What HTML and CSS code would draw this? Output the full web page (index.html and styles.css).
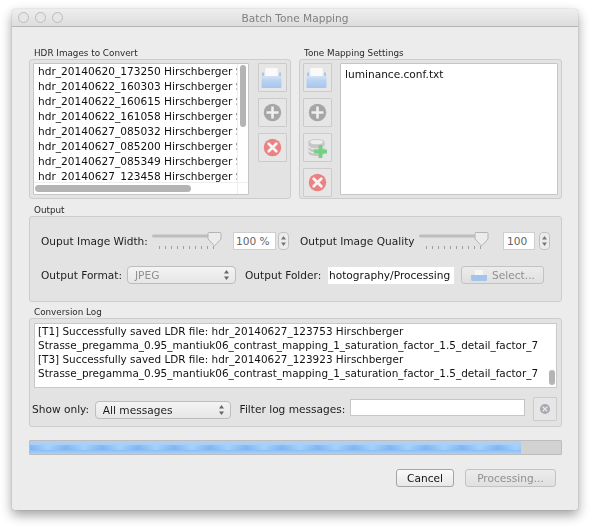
FILE: index.html
```html
<!DOCTYPE html>
<html lang="en">
<head>
<meta charset="utf-8">
<title>Batch Tone Mapping</title>
<link rel="stylesheet" href="styles.css">
</head>
<body>
<svg class="defs" width="0" height="0" aria-hidden="true">
  <defs>
    <linearGradient id="tray" x1="0" y1="0" x2="0" y2="1"><stop offset="0" stop-color="#d3e2f6"/><stop offset=".35" stop-color="#bcd3f2"/><stop offset="1" stop-color="#a5c5ee"/></linearGradient>
    <symbol id="i-open" viewBox="0 0 27 27">
      <path d="M3 8.500h2V12H3z" fill="#a9c6ec"/>
      <path d="M20 8.500h2V12h-2z" fill="#a9c6ec"/>
      <path d="M6 3.500h13v9H6z" fill="#fafafa" stroke="#dedede" stroke-width=".5"/>
      <path d="M2.500 12h20v10.500c0 1-.8 1.500-1.500 1.500H4c-.8 0-1.500-.5-1.500-1.500z" fill="url(#tray)"/>
    </symbol>
    <symbol id="i-add" viewBox="0 0 27 27">
      <circle cx="13.500" cy="13.500" r="8.700" fill="#a6a6a6"/>
      <path d="M13.500 7.500v12M7.500 13.500h12" stroke="#efefef" stroke-width="2.600"/>
    </symbol>
    <symbol id="i-del" viewBox="0 0 27 27">
      <circle cx="13.500" cy="13.500" r="8.700" fill="#e98383"/>
      <path d="M9.700 9.700l7.600 7.600M17.300 9.700l-7.600 7.600" stroke="#f8f0f0" stroke-width="2.800" stroke-linecap="round"/>
    </symbol>
    <symbol id="i-db" viewBox="0 0 27 27">
      <path d="M4.500 8c0-2 3.500-3 8-3s8 1 8 3v11c0 2-3.500 3-8 3s-8-1-8-3z" fill="#c6c6c6"/>
      <ellipse cx="12.500" cy="8" rx="6.500" ry="2.300" fill="#ececec"/>
      <path d="M4.500 12c1 2 4 3 8 3s7-1 8-3M4.500 16c1 2 4 3 8 3s7-1 8-3" fill="none" stroke="#ebebeb" stroke-width="1.100"/>
      <path d="M16.500 11v13M10 17.500h13" stroke="#74d084" stroke-width="3.800"/>
    </symbol>
    <symbol id="i-clear" viewBox="0 0 24 24">
      <circle cx="12" cy="12" r="5.500" fill="#a9a9b2"/>
      <path d="M9.500 9.500l5 5M14.500 9.500l-5 5" stroke="#e6e6e6" stroke-width="1.500"/>
    </symbol>
    <symbol id="i-mini" viewBox="0 0 18 14">
      <path d="M5 2h8v5H5z" fill="#f4f5f7"/>
      <path d="M1 7h16v4.500c0 .8-.6 1.500-1.400 1.500H2.400C1.600 13 1 12.300 1 11.500z" fill="#a6c4ea"/>
    </symbol>
    <symbol id="i-updn" viewBox="0 0 7 12">
      <path d="M3.500 1L6 4.500H1zM3.500 11L1 7.500h5z"/>
    </symbol>
    <symbol id="i-slider" viewBox="0 0 74 22" preserveAspectRatio="xMinYMin">
      <rect x="0" y="2.500" width="66" height="3" rx="1.500" fill="#bdbdbd"/>
      <g fill="#9e9e9e"><rect x="7" y="14" width="1" height="3"/><rect x="13" y="14" width="1" height="3"/><rect x="19" y="14" width="1" height="3"/><rect x="25" y="14" width="1" height="3"/><rect x="31" y="14" width="1" height="3"/><rect x="37" y="14" width="1" height="3"/><rect x="43" y="14" width="1" height="3"/><rect x="49" y="14" width="1" height="3"/><rect x="55" y="14" width="1" height="3"/><rect x="61" y="14" width="1" height="3"/></g>
      <path d="M56 1.500c0-.6.400-1 1-1h11c.6 0 1 .4 1 1v5.500L62.500 14 56 7z" fill="#ececec" stroke="#b4b4b4"/>
    </symbol>
  </defs>
</svg>

<main class="window">
  <header class="titlebar">
    <div class="lights"><i class="light"></i><i class="light"></i><i class="light"></i></div>
    <h1 class="title">Batch Tone Mapping</h1>
  </header>

  <div class="content">
    <div class="top">
      <section class="sec sec-hdr">
        <h2 class="cap">HDR Images to Convert</h2>
        <div class="group group-row group-hdr">
          <div class="list list-hdr">
            <ul class="rows">
              <li>hdr_20140620_173250 Hirschberger Strasse</li>
              <li>hdr_20140622_160303 Hirschberger Strasse</li>
              <li>hdr_20140622_160615 Hirschberger Strasse</li>
              <li>hdr_20140622_161058 Hirschberger Strasse</li>
              <li>hdr_20140627_085032 Hirschberger Strasse</li>
              <li>hdr_20140627_085200 Hirschberger Strasse</li>
              <li>hdr_20140627_085349 Hirschberger Strasse</li>
              <li>hdr_20140627_123458 Hirschberger Strasse</li>
            </ul>
            <div class="vtrack"><span class="vthumb"></span></div>
            <div class="htrack"><span class="hthumb"></span></div>
            <div class="corner"></div>
          </div>
          <div class="tools">
            <button class="tool" type="button"><svg><use href="#i-open"/></svg></button>
            <button class="tool" type="button"><svg><use href="#i-add"/></svg></button>
            <button class="tool" type="button"><svg><use href="#i-del"/></svg></button>
          </div>
        </div>
      </section>

      <section class="sec sec-tone">
        <h2 class="cap">Tone Mapping Settings</h2>
        <div class="group group-row group-tone">
          <div class="tools">
            <button class="tool" type="button"><svg><use href="#i-open"/></svg></button>
            <button class="tool" type="button"><svg><use href="#i-add"/></svg></button>
            <button class="tool" type="button"><svg><use href="#i-db"/></svg></button>
            <button class="tool" type="button"><svg><use href="#i-del"/></svg></button>
          </div>
          <div class="list list-tone">luminance.conf.txt</div>
        </div>
      </section>
    </div>

    <section class="sec">
      <h2 class="cap cap-out">Output</h2>
      <div class="group group-out">
        <div class="out-row out-row-1">
          <span class="lab lab-w">Ouput Image Width:</span>
          <svg class="slider"><use href="#i-slider"/></svg>
          <span class="field field-w">100 %</span>
          <span class="stepper"><svg><use href="#i-updn"/></svg></span>
          <span class="lab lab-q">Output Image Quality</span>
          <svg class="slider slider-q"><use href="#i-slider"/></svg>
          <span class="field field-q">100</span>
          <span class="stepper stepper-q"><svg><use href="#i-updn"/></svg></span>
        </div>
        <div class="out-row out-row-2">
          <span class="lab lab-f">Output Format:</span>
          <span class="select select-f">JPEG<svg><use href="#i-updn"/></svg></span>
          <span class="lab lab-d">Output Folder:</span>
          <span class="path">hotography/Processing</span>
          <span class="btn btn-sel"><svg><use href="#i-mini"/></svg>Select...</span>
        </div>
      </div>
    </section>

    <section class="sec">
      <h2 class="cap cap-log">Conversion Log</h2>
      <div class="group group-log">
        <div class="log">
          <div class="log-text">
            <p>[T1] Successfully saved LDR file: hdr_20140627_123753 Hirschberger Strasse_pregamma_0.95_mantiuk06_contrast_mapping_1_saturation_factor_1.5_detail_factor_7</p>
            <p>[T3] Successfully saved LDR file: hdr_20140627_123923 Hirschberger Strasse_pregamma_0.95_mantiuk06_contrast_mapping_1_saturation_factor_1.5_detail_factor_7</p>
          </div>
          <div class="log-track"><span class="log-thumb"></span></div>
        </div>
        <div class="log-row">
          <span class="lab lab-s">Show only:</span>
          <span class="select select-s">All messages<svg><use href="#i-updn"/></svg></span>
          <span class="lab lab-l">Filter log messages:</span>
          <span class="filter"></span>
          <button class="tool tool-clear" type="button"><svg><use href="#i-clear"/></svg></button>
        </div>
      </div>
    </section>

    <div class="progress"><div class="bar"></div></div>

    <div class="actions">
      <button class="btn btn-cancel" type="button">Cancel</button>
      <button class="btn btn-proc" type="button">Processing...</button>
    </div>
  </div>
</main>
</body>
</html>
```

FILE: styles.css
```css
* { box-sizing: border-box; }
html, body { margin: 0; height: 100%; }
body {
  background: #fff;
  padding: 9px 12px 0;
  font-family: "DejaVu Sans", Verdana, sans-serif;
  font-size: 10.6px;
  color: #111;
  overflow: hidden;
}
.defs { position: absolute; }
.window {
  width: 566px;
  height: 501px;
  background: #ececec;
  border-radius: 4px 4px 2px 2px;
  box-shadow: 0 0 1px rgba(0,0,0,.45), 0 5px 12px rgba(0,0,0,.38);
  filter: blur(.4px);
}
.titlebar {
  height: 18px;
  display: flex;
  align-items: center;
  position: relative;
  background: linear-gradient(#eeeeee, #dddddd);
  border-bottom: 1px solid #b5b5b5;
  border-radius: 4px 4px 0 0;
}
.lights { display: flex; gap: 6px; padding-left: 6px; }
.light {
  width: 11px;
  height: 11px;
  border-radius: 50%;
  border: 1px solid #bcbcbc;
  background: #e6e6e6;
}
.title {
  position: absolute;
  left: 0;
  right: 0;
  margin: 0;
  text-align: center;
  font-size: 10.6px;
  font-weight: 400;
  color: #808080;
}
.content { padding: 19px 16px 0 17px; }
.top { display: flex; gap: 8px; }
.sec-hdr { width: 262px; }
.sec-tone { width: 263px; }
.cap {
  margin: 0;
  padding-left: 5px;
  height: 13px;
  line-height: 14px;
  font-size: 8.8px;
  font-weight: 400;
  color: #2a2a2a;
}
.cap-out { margin-top: 4px; line-height: 15px; }
.cap-log { margin-top: 3px; line-height: 15px; }
.group {
  background: #e3e3e3;
  border: 1px solid #cdcdcd;
  border-radius: 3px;
}
.group-row { display: flex; height: 140px; padding: 3px; }
.group-hdr { gap: 9px; }
.group-tone { gap: 8px; }
.list {
  background: #fff;
  border: 1px solid #c6c6c6;
  border-radius: 1px;
  font-size: 10.6px;
}
.list-hdr {
  width: 218px;
  display: grid;
  grid-template-columns: 1fr 11px;
  grid-template-rows: 1fr 12px;
  overflow: hidden;
}
.rows {
  list-style: none;
  margin: 0;
  padding: 0 0 0 4px;
  overflow: hidden;
  min-width: 0;
}
.rows li { height: 15px; line-height: 15px; white-space: nowrap; }
.vtrack { padding: 1px 1px 0; border-left: 1px solid #eee; }
.vthumb { display: block; width: 6px; height: 62px; margin-left: 1px; background: #b4b4b4; border-radius: 3px; }
.htrack { padding: 2px 1px; border-top: 1px solid #eee; }
.hthumb { display: block; width: 156px; height: 7px; background: #b4b4b4; border-radius: 4px; }
.corner { border-top: 1px solid #eee; border-left: 1px solid #eee; }
.list-tone { flex: 1; padding: 3px 4px; line-height: 15px; }
.tools { display: flex; flex-direction: column; gap: 6px; }
.tool {
  width: 29px;
  height: 29px;
  padding: 0;
  background: #e6e6e6;
  border: 1px solid #cbcbcb;
  border-radius: 1px;
  display: flex;
}
.tool svg { width: 27px; height: 27px; }

.group-out { height: 86px; padding: 15px 0 0 11px; }
.out-row { display: flex; align-items: center; height: 18px; }
.out-row-2 { margin-top: 16px; }
.lab { white-space: nowrap; color: #1c1c1c; }
.lab-w { width: 111px; }
.slider { width: 74px; height: 22px; margin-top: 4px; }
.field {
  background: #fff;
  border: 1px solid #cfcfcf;
  height: 18px;
  line-height: 16px;
  padding-left: 2px;
  color: #666;
}
.field-w { width: 43px; margin-left: 7px; }
.stepper {
  width: 11px;
  height: 18px;
  margin-left: 2px;
  border: 1px solid #c2c2c2;
  border-radius: 4px;
  background: #ececec;
  display: flex;
  align-items: center;
  justify-content: center;
  fill: #777;
}
.stepper svg { width: 7px; height: 12px; }
.lab-q { width: 119px; margin-left: 11px; }
.field-q { width: 32px; margin-left: 7px; padding-left: 3px; }
.slider-q { width: 77px; }
.stepper-q { margin-left: 4px; }
.select {
  display: flex;
  align-items: center;
  justify-content: space-between;
  height: 18px;
  background: linear-gradient(#f4f4f4, #e6e6e6);
  border: 1px solid #bdbdbd;
  border-radius: 4px;
  fill: #666;
}
.select svg { width: 7px; height: 12px; }
.lab-f { width: 86px; }
.select-f { width: 109px; padding: 0 5px 0 7px; color: #8e8e8e; }
.lab-d { margin-left: 9px; width: 83px; }
.path {
  width: 126px;
  height: 17px;
  background: #fff;
  line-height: 17px;
  overflow: hidden;
  padding-left: 1px;
  white-space: nowrap;
  font-size: 10.6px;
}
.btn {
  display: inline-flex;
  align-items: center;
  justify-content: center;
  font: inherit;
  height: 18px;
  padding: 0;
  border: 1px solid #c3c3c3;
  border-radius: 3px;
  background: linear-gradient(#ececec, #e0e0e0);
  color: #8f8f8f;
}
.btn-sel { width: 83px; margin-left: 7px; gap: 4px; }
.btn-sel svg { width: 18px; height: 14px; }

.group-log { height: 109px; padding: 4px 4px 0; }
.log {
  height: 65px;
  background: #fff;
  border: 1px solid #c9c9c9;
  display: flex;
  overflow: hidden;
  font-size: 10.45px;
}
.log-text { width: 510px; padding: 0 0 0 3px; flex: none; }
.log-text p { margin: 0; line-height: 14px; }
.log-track { flex: 1; padding: 46px 0 0 4px; }
.log-thumb { display: block; width: 6px; height: 15px; background: #b4b4b4; border-radius: 3px; }
.log-row { display: flex; align-items: center; height: 24px; margin-top: 9px; margin-left: -2px; }
.lab-s { width: 63px; }
.select-s { width: 136px; padding: 0 5px 0 7px; color: #1c1c1c; margin-top: 1px; }
.lab-l { width: 111px; margin-left: 9px; }
.filter { width: 175px; height: 17px; background: #fff; border: 1px solid #c6c6c6; margin-top: -4px; }
.tool-clear { width: 24px; height: 24px; margin-left: 8px; }
.tool-clear svg { width: 22px; height: 22px; }

.progress {
  margin-top: 13px;
  height: 15px;
  background: #d2d2d2;
  border: 1px solid #bdbdbd;
  border-radius: 1px;
  overflow: hidden;
}
.bar {
  width: 491px;
  height: 100%;
  background:
    repeating-linear-gradient(90deg, rgba(112,172,240,.6) 0, rgba(175,216,252,.6) 18px, rgba(112,172,240,.6) 36px) 0 50% / 100% 5px no-repeat,
    linear-gradient(#b3cff4 0, #a8cef7 30%, #8cbef5 70%, #a8d0f9 100%);
}
.actions { display: flex; justify-content: flex-end; gap: 11px; margin-top: 14px; padding-right: 6px; }
.btn-cancel { width: 58px; background: linear-gradient(#fafafa, #e8e8e8); border-color: #a5a5a5; color: #111; }
.btn-proc { width: 91px; color: #8f8f8f; }
```
